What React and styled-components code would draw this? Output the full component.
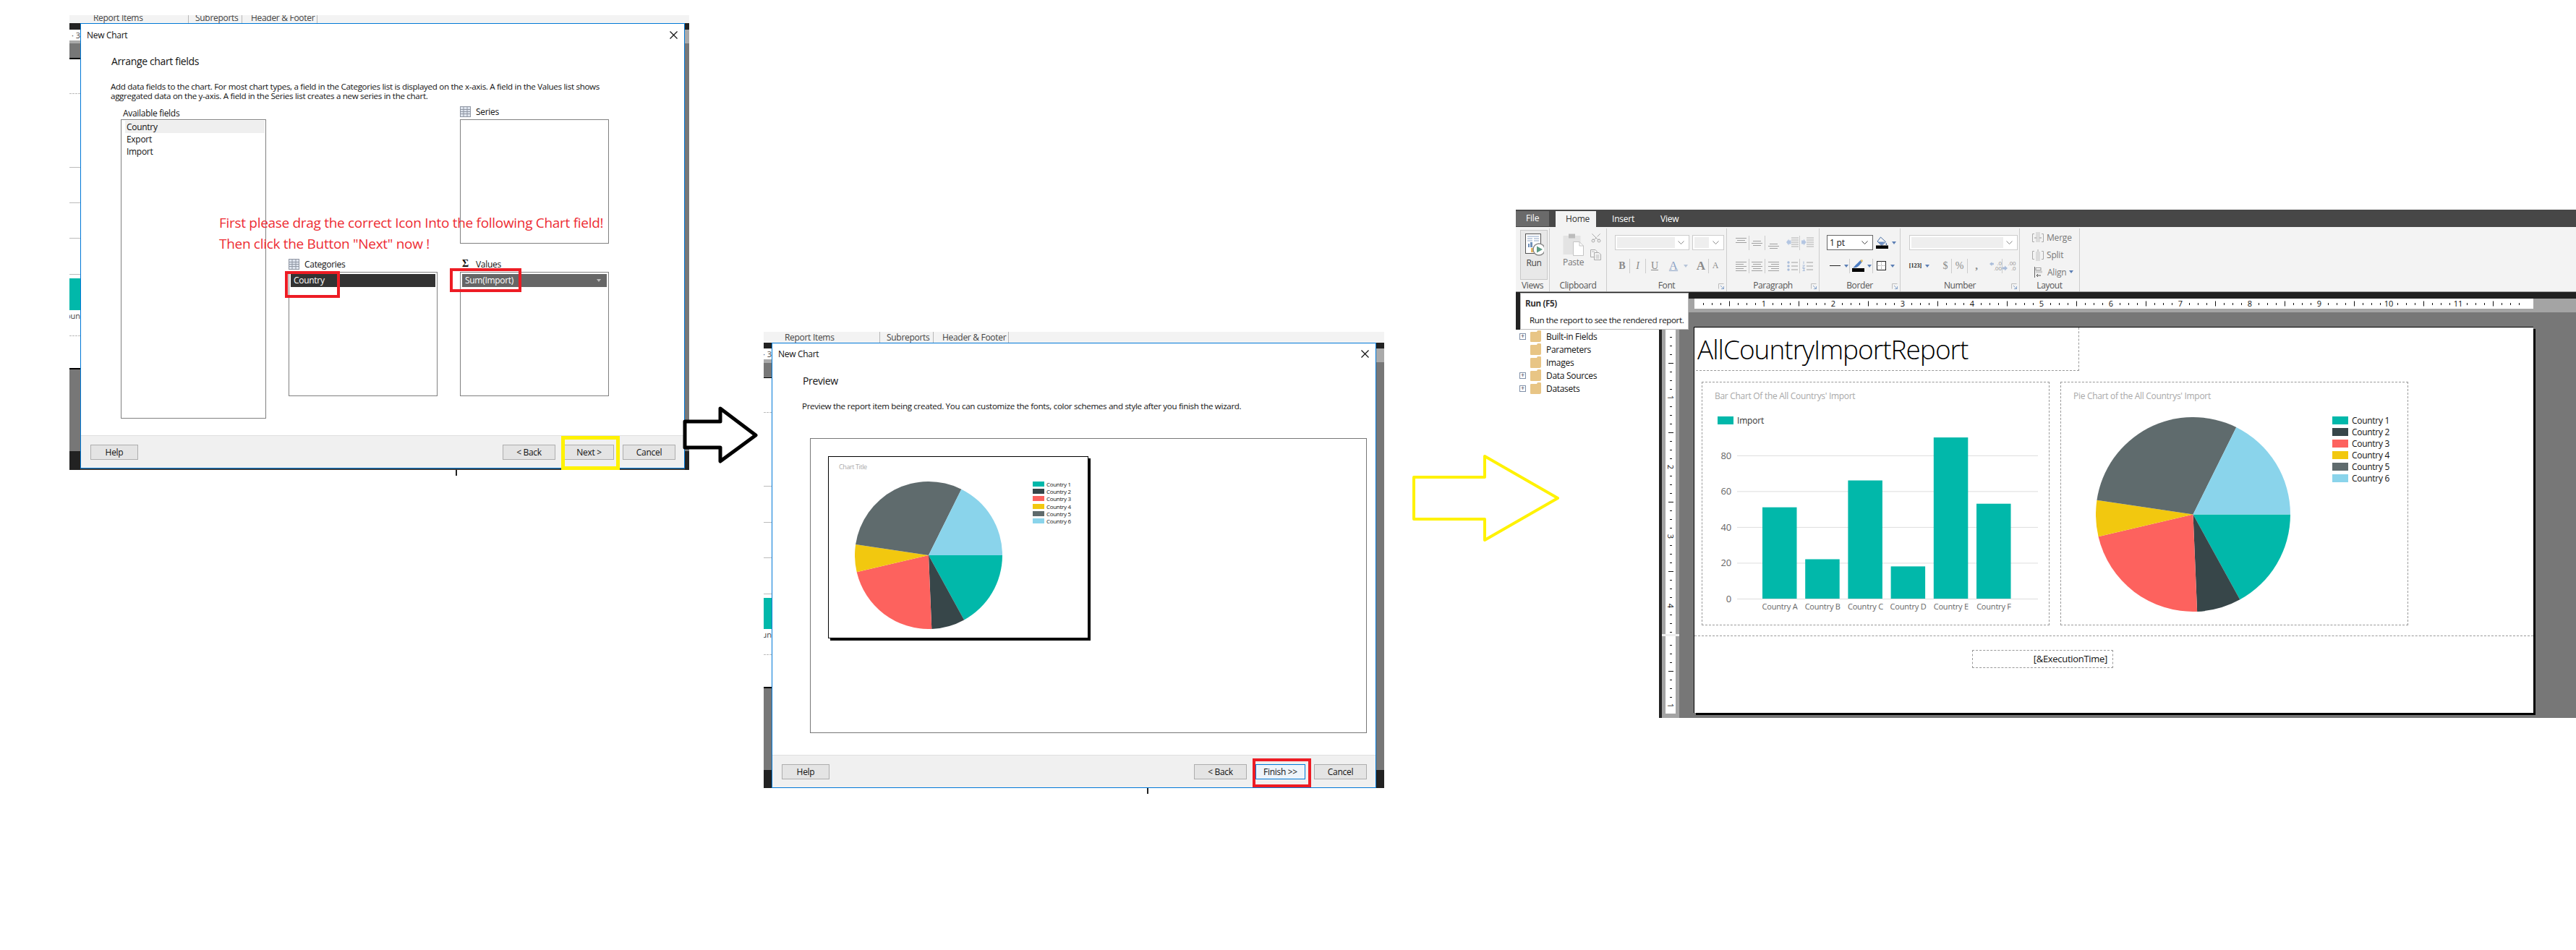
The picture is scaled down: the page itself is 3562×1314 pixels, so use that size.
import React from "react";
import styled, { createGlobalStyle } from "styled-components";
import { Scissors } from "lucide-react";

const FONT = `"Open Sans", "Liberation Sans", sans-serif`;

const GlobalStyle = createGlobalStyle`
	html, body {
		margin: 0;
		padding: 0;
		background: #fff;
	}
	body {
		font-family: ${FONT};
		color: #111;
	}
	* {
		box-sizing: border-box;
	}
`;

const COUNTRY_COLORS = ["#01B8AA", "#374649", "#FD625E", "#F2C80F", "#5F6B6D", "#8AD4EB"];
const COUNTRY_VALUES = [51, 22, 66, 18, 90, 53];
const COUNTRY_NAMES = ["Country 1", "Country 2", "Country 3", "Country 4", "Country 5", "Country 6"];

// the canvas holds three pasted screenshots and two arrows, placed freely
const Canvas = styled.div`
	position: relative;
	width: 3562px;
	height: 1314px;
	overflow: hidden;
	background: #fff;
`;

const Shot = styled.div`
	position: absolute;
	left: ${(p) => p.$left}px;
	top: ${(p) => p.$top}px;
	width: ${(p) => p.$w}px;
	height: ${(p) => p.$h}px;
	display: flex;
	flex-direction: column;
`;

const ArrowSvg = styled.svg`
	position: absolute;
	left: ${(p) => p.$left}px;
	top: ${(p) => p.$top}px;
`;

/* ---------- wizard screenshots ---------- */

const TabStrip = styled.div`
	flex: none;
	height: ${(p) => p.$h}px;
	background: #f3f3f3;
	overflow: hidden;
	display: flex;
	align-items: flex-end;
	padding-left: ${(p) => p.$inset}px;
	font-size: 12px;
	color: #444;
`;

const TabItem = styled.div`
	flex: none;
	width: ${(p) => p.$w}px;
	height: 15px;
	line-height: 15px;
	padding-left: ${(p) => p.$pad}px;
	border-right: 1px solid #b8b8b8;
	white-space: nowrap;
	letter-spacing: -0.3px;
`;

const WizardWindow = styled.div`
	flex: 1;
	display: flex;
	background: #3a3a3a;
	min-height: 0;
`;

const Edge = styled.div`
	flex: none;
	width: ${(p) => p.$w}px;
	display: flex;
	flex-direction: column;
	overflow: hidden;
`;

const EdgeSlice = styled.div`
	flex: ${(p) => (p.$grow ? "1" : "none")};
	height: ${(p) => p.$h}px;
	background: ${(p) => p.$bg};
	font-size: 11px;
	line-height: 15px;
	color: #444;
	white-space: nowrap;
	display: flex;
	justify-content: flex-end;
	border-bottom: ${(p) => (p.$line ? `1px ${p.$line} #bbb` : "none")};
`;

const Dialog = styled.div`
	flex: none;
	width: 836px;
	height: 616px;
	background: #fff;
	border: 1px solid #0078d7;
	display: flex;
	flex-direction: column;
`;

const TitleBar = styled.div`
	flex: none;
	height: 30px;
	display: flex;
	align-items: center;
	justify-content: space-between;
	padding: 0 9px 0 8px;
	font-size: 12px;
	letter-spacing: -0.3px;
`;

const WizardBody = styled.div`
	flex: 1;
	padding-left: 41px;
	min-height: 0;
`;

const WizardHeading = styled.div`
	margin: 12px 0 0 1px;
	height: 20px;
	line-height: 20px;
	font-size: 14px;
	letter-spacing: -0.35px;
`;

const WizardText = styled.p`
	margin: 18px 0 0;
	font-size: 11.6px;
	line-height: 13px;
	letter-spacing: -0.31px;
	white-space: nowrap;
`;

const FieldArea = styled.div`
	margin: 8px 0 0 14px;
	display: grid;
	grid-template-columns: 201px 206px 206px;
	column-gap: 31px;
`;

const FieldColumn = styled.div`
	display: flex;
	flex-direction: column;
	padding-top: ${(p) => p.$top || 0}px;
`;

const FieldLabel = styled.div`
	display: flex;
	align-items: center;
	gap: 7px;
	height: 18px;
	padding: ${(p) => (p.$plain ? "0 0 0 3px" : "0 0 4px 0")};
	margin-top: ${(p) => p.$gap || 0}px;
	font-size: 12px;
	letter-spacing: -0.3px;
`;

const FieldBox = styled.div`
	height: ${(p) => p.$h}px;
	border: 1px solid #808080;
	padding: ${(p) => p.$pad};
	font-size: 12px;
	letter-spacing: -0.3px;
`;

const ListRow = styled.div`
	height: 17px;
	line-height: 17px;
	padding-left: 2px;
	background: ${(p) => (p.$active ? "#efefef" : "transparent")};
`;

const FieldChip = styled.div`
	height: 18px;
	line-height: 18px;
	padding: 0 8px 0 4px;
	background: ${(p) => p.$bg};
	color: #fff;
	display: flex;
	align-items: center;
	justify-content: space-between;
`;

const Sigma = styled.span`
	width: 15px;
	text-align: center;
	font: bold 14px "Liberation Serif", serif;
`;

const ChipCaret = styled.span`
	width: 0;
	height: 0;
	border-left: 3.5px solid transparent;
	border-right: 3.5px solid transparent;
	border-top: 4px solid #bbb;
`;

const WizardFooter = styled.div`
	flex: none;
	height: 45px;
	background: #f0f0f0;
	border-top: 1px solid #dfdfdf;
	display: flex;
	gap: 12px;
	padding: 12px 14px 0 13px;
`;

const WizardButton = styled.div`
	flex: none;
	width: ${(p) => p.$w}px;
	height: 21px;
	line-height: 19px;
	margin-left: ${(p) => p.$left || 0}px;
	text-align: center;
	font-size: 12px;
	letter-spacing: -0.3px;
	background: ${(p) => (p.$primary ? "#eef4fa" : "#e4e4e4")};
	border: 1px solid ${(p) => (p.$primary ? "#0078d7" : "#adadad")};
`;

const Callout = styled.div`
	position: absolute;
	left: ${(p) => p.$left}px;
	top: ${(p) => p.$top}px;
	width: ${(p) => p.$w}px;
	height: ${(p) => p.$h}px;
	border: ${(p) => p.$b || 4}px solid ${(p) => p.$color};
`;

const Instruction = styled.div`
	position: absolute;
	left: 207px;
	top: 273px;
	font-size: 19px;
	line-height: 29px;
	letter-spacing: -0.3px;
	color: #ed2c33;
	white-space: nowrap;
`;

const CursorTick = styled.div`
	position: absolute;
	left: ${(p) => p.$left}px;
	top: ${(p) => p.$top}px;
	width: 2px;
	height: 8px;
	background: #222;
`;

const PreviewBox = styled.div`
	margin: 38px 0 0 11px;
	width: 770px;
	height: 408px;
	border: 1px solid #777;
	padding: 24px 0 0 24px;
`;

const PreviewFrame = styled.div`
	width: 360px;
	height: 252px;
	border: 1px solid #000;
	box-shadow: 3px 3px 0 #000;
	padding: 9px 0 0 14px;
	background: #fff;
`;

const PreviewTitle = styled.div`
	height: 10px;
	line-height: 10px;
	font-size: 9px;
	letter-spacing: -0.4px;
	color: #aaa;
`;

const PreviewRow = styled.div`
	display: flex;
	align-items: flex-start;
	margin: 15px 0 0 22px;
	gap: 42px;
`;

const Legend = styled.div`
	display: flex;
	flex-direction: column;
	gap: ${(p) => p.$gap}px;
	margin-top: ${(p) => p.$top || 0}px;
`;

const LegendRow = styled.div`
	display: flex;
	align-items: center;
	gap: ${(p) => p.$gap}px;
	height: ${(p) => p.$h}px;
	font-size: ${(p) => p.$size}px;
	letter-spacing: -0.3px;
	white-space: nowrap;
`;

const LegendSwatch = styled.span`
	flex: none;
	width: ${(p) => p.$w}px;
	height: ${(p) => p.$h}px;
	background: ${(p) => p.$color};
`;

/* ---------- report designer screenshot ---------- */

const MenuBar = styled.div`
	flex: none;
	height: 24px;
	background: #474747;
	display: flex;
	align-items: flex-end;
	font-size: 12px;
	letter-spacing: -0.2px;
	color: #fff;
`;

const MenuFile = styled.div`
	width: 46px;
	height: 21px;
	margin-bottom: 1px;
	line-height: 19px;
	padding-left: 14px;
	background: #6a6a6a;
	margin-right: 9px;
`;

const MenuTab = styled.div`
	width: ${(p) => p.$w}px;
	height: 22px;
	line-height: 22px;
	padding-left: ${(p) => p.$pad}px;
	background: ${(p) => (p.$active ? "#f3f3f3" : "transparent")};
	color: ${(p) => (p.$active ? "#333" : "#fff")};
`;

const Ribbon = styled.div`
	flex: none;
	height: 90px;
	background: #f3f3f3;
	border-bottom: 1px solid #999;
	display: flex;
	padding-top: 2px;
`;

const RibbonGroup = styled.div`
	position: relative;
	flex: none;
	width: ${(p) => p.$w}px;
	height: 87px;
	border-right: 1px solid #ccc;
	display: flex;
	flex-direction: column;
	padding-left: ${(p) => p.$pad || 0}px;
`;

const GroupContent = styled.div`
	flex: 1;
	min-height: 0;
	display: flex;
	flex-direction: column;
	gap: ${(p) => p.$gap ?? 11}px;
	padding-top: ${(p) => p.$top ?? 9}px;
`;

const GroupLabel = styled.div`
	flex: none;
	height: 15px;
	line-height: 14px;
	margin-left: ${(p) => -(p.$pad || 0)}px;
	text-align: center;
	font-size: 12px;
	letter-spacing: -0.4px;
	color: #555;
`;

const Launcher = styled.svg`
	position: absolute;
	right: 3px;
	bottom: 3px;
`;

const RunButton = styled.div`
	width: 38px;
	height: 69px;
	margin: 2px 0 0 6px;
	background: #e8e8e8;
	border: 1px solid #c8c8c8;
	display: flex;
	flex-direction: column;
	align-items: center;
	padding-top: 4px;
	font-size: 12px;
	letter-spacing: -0.3px;
	color: #444;
`;

const BigLabel = styled.div`
	margin-top: ${(p) => p.$top}px;
	font-size: 12px;
	line-height: 16px;
	letter-spacing: -0.3px;
	color: ${(p) => p.$color || "#777"};
`;

const ClipboardBody = styled.div`
	display: flex;
	gap: 9px;
	padding: 7px 0 0 18px;
`;

const PasteColumn = styled.div`
	display: flex;
	flex-direction: column;
	align-items: center;
`;

const SmallColumn = styled.div`
	display: flex;
	flex-direction: column;
	gap: 8px;
	margin-top: -2px;
`;

const ScissorsIcon = styled(Scissors)`
	transform: rotate(-90deg);
`;

const RibbonRow = styled.div`
	display: flex;
	align-items: center;
	height: ${(p) => p.$h || 21}px;
`;

const Cell = styled.div`
	flex: none;
	width: ${(p) => p.$w}px;
	height: 20px;
	display: flex;
	align-items: center;
	justify-content: center;
	margin-right: ${(p) => p.$gap || 0}px;
	border-right: ${(p) => (p.$sep ? "1px solid #ccc" : "none")};
	color: ${(p) => p.$color || "#8a8a8a"};
	font: ${(p) => (p.$bold ? "bold " : "")}${(p) => (p.$italic ? "italic " : "")}${(p) => p.$size || 14}px "Liberation Serif", serif;
	text-decoration: ${(p) => (p.$under ? "underline" : "none")};
	white-space: nowrap;
`;

const DecimalStack = styled.span`
	display: flex;
	flex-direction: column;
	font: 8px/7px "Liberation Sans", sans-serif;
	color: #999;
	text-align: right;
`;

const ComboBox = styled.div`
	flex: none;
	width: ${(p) => p.$w}px;
	height: 21px;
	margin-right: ${(p) => p.$gap || 0}px;
	background: #fff;
	border: 1px solid ${(p) => (p.$dark ? "#666" : "#ccc")};
	display: flex;
	align-items: center;
	justify-content: space-between;
	padding: 2px 6px 2px 2px;
	font-size: 12px;
	letter-spacing: -0.2px;
`;

const ComboFill = styled.div`
	width: ${(p) => p.$w}px;
	height: 100%;
	background: #eeeeee;
`;

const ComboText = styled.span`
	padding-left: 1px;
`;

const LayoutRow = styled.div`
	display: flex;
	align-items: center;
	height: 24px;
	gap: 4px;
	padding-left: ${(p) => p.$pad}px;
	font-size: 12px;
	letter-spacing: -0.2px;
	color: #777;
`;

const DarkBar = styled.div`
	flex: none;
	height: 9px;
	background: #222;
`;

const Designer = styled.div`
	flex: 1;
	min-height: 0;
	display: flex;
`;

const TreeColumn = styled.div`
	flex: none;
	width: 202px;
	background: #fff;
	border-right: 4px solid #222;
	display: flex;
	flex-direction: column;
`;

const TreeHead = styled.div`
	flex: none;
	height: 43px;
	background: #222;
`;

const TreeRow = styled.div`
	display: flex;
	align-items: center;
	height: 18px;
	padding-left: 5px;
	font-size: 12px;
	letter-spacing: -0.3px;
`;

const Expander = styled.span`
	flex: none;
	width: 9px;
	height: 9px;
	margin-right: 6px;
	border: 1px solid ${(p) => (p.$empty ? "transparent" : "#7f8fa8")};
	color: #445;
	font: 9px/7px "Liberation Sans", sans-serif;
	text-align: center;
`;

const TreeLabel = styled.span`
	margin-left: 7px;
`;

const DesignArea = styled.div`
	flex: 1;
	min-width: 0;
	display: flex;
	flex-direction: column;
`;

const RulerBand = styled.div`
	flex: none;
	height: 19px;
	background: #a4a4a4;
	padding-left: 45px;
`;

const WorkRow = styled.div`
	flex: 1;
	min-height: 0;
	display: flex;
`;

const RulerTrack = styled.div`
	flex: none;
	width: 24px;
	background: #a4a4a4;
	padding-top: 22px;
	display: flex;
	flex-direction: column;
`;

const RulerGap = styled.div`
	flex: none;
	height: 3px;
	background: #eee;
`;

const RulerSvg = styled.svg`
	display: block;
	flex: none;
	background: #fff;
	margin-left: ${(p) => p.$left || 0}px;
`;

const RulerDigit = styled.text`
	font-family: ${FONT};
	font-size: 11px;
	fill: #111;
`;

const Workspace = styled.div`
	flex: 1;
	background: #777;
	padding: 20px 0 0 20px;
`;

const ReportPage = styled.div`
	width: 1161px;
	height: 534px;
	background: #fff;
	border-top: 1px solid #000;
	border-left: 1px solid #000;
	box-shadow: 3px 3px 0 #000;
`;

const dash = "1px dashed #999";

const ReportHeader = styled.div`
	width: 530px;
	height: 60px;
	margin-left: 2px;
	border-right: ${dash};
	border-bottom: ${dash};
	padding-left: 2px;
	font-size: 37px;
	font-weight: 300;
	line-height: 60px;
	letter-spacing: -1px;
	white-space: nowrap;
	color: #000;
`;

const ChartRow = styled.div`
	display: flex;
	gap: 15px;
	margin: 15px 0 0 10px;
`;

const ChartCard = styled.div`
	flex: none;
	width: 481px;
	height: 337px;
	border: ${dash};
	padding: 11px 0 0 17px;
`;

const ChartCaption = styled.div`
	height: 16px;
	line-height: 16px;
	font-size: 12px;
	letter-spacing: -0.3px;
	color: #a8a8a8;
	white-space: nowrap;
`;

const BarSvg = styled.svg`
	display: block;
	margin: 8px 0 0 -17px;
`;

const AxisText = styled.text`
	font-family: ${FONT};
	font-size: ${(p) => p.$size}px;
	fill: ${(p) => p.$color || "#666"};
	letter-spacing: -0.2px;
`;

const PieRow = styled.div`
	display: flex;
	align-items: flex-start;
	gap: 58px;
	margin: 21px 0 0 31px;
`;

const ReportFooter = styled.div`
	margin-top: 14px;
	border-top: ${dash};
	padding: 19px 0 0 384px;
`;

const TimeBox = styled.div`
	width: 195px;
	height: 25px;
	line-height: 23px;
	border: ${dash};
	padding-right: 7px;
	text-align: right;
	font-size: 13px;
	letter-spacing: -0.3px;
`;

const Tooltip = styled.div`
	position: absolute;
	left: 6px;
	top: 115px;
	width: 233px;
	height: 51px;
	background: #fff;
	border: 1px solid #bbb;
	padding: 6px 0 0 6px;
	font-size: 11.6px;
	letter-spacing: -0.38px;
`;

const TooltipTitle = styled.div`
	height: 15px;
	line-height: 15px;
	font-weight: 700;
	color: #333;
`;

const TooltipText = styled.div`
	margin: 8px 0 0 6px;
	height: 15px;
	line-height: 15px;
	white-space: nowrap;
`;

/* ---------- drawings ---------- */

const Close = () => (
	<svg width="11" height="11" viewBox="0 0 11 11">
		<path d="M0.5 0.5 L10.5 10.5 M10.5 0.5 L0.5 10.5" stroke="#111" strokeWidth="1.2" />
	</svg>
);

const TableIcon = () => (
	<svg width="15" height="15" viewBox="0 0 15 15">
		<rect x="0.5" y="0.5" width="14" height="14" fill="#dfe5ee" stroke="#8f96a3" />
		<path d="M0 4.5H15M0 7.5H15M0 10.5H15M5 0V15M10 0V15" stroke="#8f96a3" strokeWidth="1" />
	</svg>
);

const Chevron = ({ color = "#888" }) => (
	<svg width="9" height="6" viewBox="0 0 9 6">
		<path d="M0.5 0.5 L4.5 4.5 L8.5 0.5" fill="none" stroke={color} strokeWidth="1" />
	</svg>
);

const Caret = ({ color = "#5c7fb5" }) => (
	<svg width="6" height="4" viewBox="0 0 6 4">
		<path d="M0 0H6L3 4Z" fill={color} />
	</svg>
);

const CornerMark = () => (
	<Launcher width="8" height="8" viewBox="0 0 8 8">
		<path d="M0.5 7.5V0.5H7.5" fill="none" stroke="#bbb" />
		<path d="M3 3L7.5 7.5M7.5 4V7.5H4" fill="none" stroke="#8aa6cc" />
	</Launcher>
);

const RunIcon = () => (
	<svg width="27" height="31" viewBox="0 0 27 31">
		<rect x="1.5" y="0.5" width="21" height="27" fill="#fff" stroke="#555" />
		<path d="M4 4H20M4 7H11M13 7H20M4 10H11M13 10H20" stroke="#8ba3c4" />
		<rect x="5" y="14" width="2" height="5" fill="#6f8fb8" />
		<rect x="8" y="12" width="3" height="7" fill="#6f8fb8" />
		<rect x="9" y="20" width="3" height="6" fill="#e8b860" />
		<circle cx="20" cy="22" r="8" fill="#fff" stroke="#888" strokeWidth="1.5" />
		<path d="M17 17.5L25 22L17 26.5Z" fill="#5e9c84" />
	</svg>
);

const PasteIcon = () => (
	<svg width="29" height="31" viewBox="0 0 29 31">
		<rect x="0.5" y="3" width="24" height="26" fill="#e3e3e3" />
		<rect x="8" y="0.5" width="9" height="6" fill="#bcbcbc" />
		<path d="M14.5 11.5H23L28.5 17V30.5H14.5Z" fill="#fff" stroke="#c4c4c4" />
		<path d="M23 11.5V17H28.5" fill="none" stroke="#c4c4c4" />
	</svg>
);

const CopyIcon = () => (
	<svg width="15" height="15" viewBox="0 0 15 15">
		<path d="M0.5 0.5H7L9 2.5V10.5H0.5Z" fill="#f6f6f6" stroke="#aaa" />
		<path d="M5.5 4.5H12L14.5 7V14.5H5.5Z" fill="#f6f6f6" stroke="#aaa" />
		<path d="M2 3H6M7.5 8H12.5M7.5 10H12.5M7.5 12H12.5" stroke="#bbb" />
	</svg>
);

const AlignLines = ({ align, widths, offset = 0 }) => {
	const span = 15;
	return (
		<svg width="15" height="20" viewBox="0 0 15 20">
			{widths.map((w, i) => {
				const x = align === "left" ? 0 : align === "right" ? span - w : (span - w) / 2;
				return <rect key={i} x={x} y={offset + i * 3} width={w} height="1" fill="#a0a0a0" />;
			})}
		</svg>
	);
};

const IndentIcon = ({ flip }) => (
	<svg width="17" height="15" viewBox="0 0 17 15">
		<path d="M7 1H17M7 4H17M7 7H17M7 10H17M7 13H17" stroke="#b0b0b0" />
		<path d={flip ? "M0 4.5H3V2.5L6.5 7L3 11.5V9.5H0Z" : "M6.5 4.5H3.5V2.5L0 7L3.5 11.5V9.5H6.5Z"} fill="#b4c6e2" />
	</svg>
);

const ListIcon = ({ numbered }) => (
	<svg width="15" height="14" viewBox="0 0 15 14">
		<path d="M6 2H15M6 7H15M6 12H15" stroke="#a0a0a0" />
		{numbered ? (
			<path d="M2 0.5V4M0.5 6H3.5L0.5 9H3.5M0.5 10.5H3.5L2 12L3.5 13.5H0.5" fill="none" stroke="#a9bcd9" strokeWidth="1" />
		) : (
			<g fill="#a9bcd9">
				<circle cx="2" cy="2" r="1.7" />
				<circle cx="2" cy="7" r="1.7" />
				<circle cx="2" cy="12" r="1.7" />
			</g>
		)}
	</svg>
);

const BucketIcon = () => (
	<svg width="17" height="17" viewBox="0 0 17 17">
		<path d="M6.5 1L13.5 7.5L8 12.5L2 7Z" fill="#f4f4f4" stroke="#4a6fa5" />
		<path d="M2.5 7.5H12.5L8 12Z" fill="#6d8fc4" />
		<path d="M14 8.5C15.5 10.5 15.5 12 14.5 12C13.5 12 13.3 10.5 14 8.5Z" fill="#4a6fa5" />
		<rect x="0" y="12.5" width="17" height="4.5" fill="#000" />
	</svg>
);

const PenIcon = () => (
	<svg width="17" height="17" viewBox="0 0 17 17">
		<path d="M1 11.5C3 10 4 8 7 5.5L12 0.5L14.5 2.5L10 8C8 10.5 5 11.5 1 11.5Z" fill="#4f7fc4" />
		<path d="M11.5 1L14 0L15 2L13 4Z" fill="#e8c060" />
		<rect x="0" y="12" width="17" height="5" fill="#000" />
	</svg>
);

const BorderBoxIcon = () => (
	<svg width="13" height="13" viewBox="0 0 13 13">
		<rect x="0.5" y="0.5" width="12" height="12" fill="#fff" stroke="#222" />
		<path d="M6.5 2V11M2 6.5H11" stroke="#888" strokeDasharray="1 1" />
	</svg>
);

const DecimalArrow = ({ flip }) => (
	<svg width="7" height="14" viewBox="0 0 7 14">
		<path d={flip ? "M0 8.5H3V6.5L7 10L3 13.5V11.5H0Z" : "M7 2H4V0L0 3.5L4 7V5H7Z"} fill="#a9bcd9" />
	</svg>
);

const MergeIcon = ({ split }) => (
	<svg width="16" height="16" viewBox="0 0 16 16">
		<path d="M3 2.5H0.5V13.5H3M13 2.5H15.5V13.5H13" fill="none" stroke="#aaa" />
		<rect x="5" y={split ? 3 : 0} width="6" height={split ? 13 : 14} fill="#dcdcdc" />
		{split ? <path d="M8 0V3" stroke="#aaa" /> : <path d="M3 8H6M13 8H10" stroke="#999" />}
	</svg>
);

const AlignIcon = () => (
	<svg width="11" height="15" viewBox="0 0 11 15">
		<path d="M0.5 0V15" stroke="#666" />
		<rect x="2" y="1.5" width="7" height="3" fill="#fff" stroke="#999" />
		<rect x="2" y="5.5" width="9" height="3" fill="#ccc" />
		<path d="M9 12H3M5 10L3 12L5 14" fill="none" stroke="#555" />
	</svg>
);

const FolderIcon = () => (
	<svg width="15" height="16" viewBox="0 0 15 16">
		<path d="M0 3C0 2 1 2 2 2H9L10 0H13C14 0 15 0 15 1V14C15 15 14 16 13 16H1C0 16 0 15 0 14Z" fill="#e8c585" />
	</svg>
);

const PieChart = ({ size, values, colors }) => {
	const r = size / 2;
	const total = values.reduce((a, b) => a + b, 0);
	let angle = 0;
	const slices = values.map((v, i) => {
		const start = angle;
		angle += (v / total) * Math.PI * 2;
		const large = angle - start > Math.PI ? 1 : 0;
		const x1 = r + r * Math.cos(start);
		const y1 = r + r * Math.sin(start);
		const x2 = r + r * Math.cos(angle);
		const y2 = r + r * Math.sin(angle);
		return <path key={i} d={`M${r} ${r}L${x1} ${y1}A${r} ${r} 0 ${large} 1 ${x2} ${y2}Z`} fill={colors[i]} />;
	});
	return (
		<svg width={size} height={size} viewBox={`0 0 ${size} ${size}`}>
			{slices}
		</svg>
	);
};

const CountryLegend = ({ gap, rowH, size, swatchW, swatchH, textGap, top }) => (
	<Legend $gap={gap} $top={top}>
		{COUNTRY_NAMES.map((name, i) => (
			<LegendRow key={name} $gap={textGap} $h={rowH} $size={size}>
				<LegendSwatch $w={swatchW} $h={swatchH} $color={COUNTRY_COLORS[i]} />
				{name}
			</LegendRow>
		))}
	</Legend>
);

const BarChart = () => {
	// y of value v in svg coordinates
	const y = (v) => 264 - v * 2.477;
	const names = ["Country A", "Country B", "Country C", "Country D", "Country E", "Country F"];
	return (
		<BarSvg width="479" height="295" viewBox="0 0 479 295">
			<rect x="21" y="12" width="22" height="11" fill="#01B8AA" />
			<AxisText x="48" y="22" $size={12} $color="#333">Import</AxisText>
			{[0, 20, 40, 60, 80].map((v) => (
				<g key={v}>
					<line x1="48" x2="464" y1={y(v) + 0.5} y2={y(v) + 0.5} stroke="#ddd" />
					<AxisText x="40" y={y(v) + 5} textAnchor="end" $size={13}>{v}</AxisText>
				</g>
			))}
			{COUNTRY_VALUES.map((v, i) => (
				<g key={names[i]}>
					<rect x={83 + i * 59.2} y={y(v)} width="47.5" height={v * 2.477} fill="#01B8AA" />
					<AxisText x={107 + i * 59.2} y="279" textAnchor="middle" $size={11}>{names[i]}</AxisText>
				</g>
			))}
		</BarSvg>
	);
};

// 96 pixels to the inch, a tick every eighth
const RULER_STEP = 12;

const HorizontalRuler = () => {
	const marks = [];
	for (let i = 1; i < 96; i++) {
		const x = i * RULER_STEP;
		if (i % 8 === 0) {
			marks.push(<RulerDigit key={i} x={x} y="11" textAnchor="middle">{i / 8}</RulerDigit>);
		} else if (i % 4 === 0) {
			marks.push(<rect key={i} x={x} y="3.5" width="1" height="7" fill="#111" />);
		} else {
			marks.push(<rect key={i} x={x} y="6" width="1" height="3" fill="#111" />);
		}
	}
	return (
		<RulerSvg width="1160" height="14" viewBox="0 0 1160 14">
			{marks}
		</RulerSvg>
	);
};

const VerticalRuler = ({ height }) => {
	const marks = [];
	for (let i = 1; i * RULER_STEP < height; i++) {
		const y = i * RULER_STEP;
		if (i % 8 === 0) {
			marks.push(
				<RulerDigit key={i} x="7" y={y} textAnchor="middle" dominantBaseline="central" transform={`rotate(90 7 ${y})`}>
					{i / 8}
				</RulerDigit>
			);
		} else if (i % 4 === 0) {
			marks.push(<rect key={i} x="4" y={y} width="7" height="1" fill="#111" />);
		} else {
			marks.push(<rect key={i} x="6" y={y} width="3" height="1" fill="#111" />);
		}
	}
	return (
		<RulerSvg $left={5} width="14" height={height} viewBox={`0 0 14 ${height}`}>
			{marks}
		</RulerSvg>
	);
};

/* ---------- pieces of the wizard ---------- */

const LEFT_EDGE = [
	{ h: 8.6, bg: "#222" },
	{ h: 15, bg: "#fff", text: "· 3" },
	{ h: 4.5, bg: "#aaa" },
	{ h: 20, bg: "#777" },
	{ h: 1.5, bg: "#000" },
	{ h: 48, bg: "#fff", line: "dashed" },
	{ h: 102, bg: "#fff", line: "solid" },
	{ h: 49.5, bg: "#fff", line: "solid" },
	{ h: 49, bg: "#fff", line: "solid" },
	{ h: 50, bg: "#fff", line: "solid" },
	{ h: 5, bg: "#fff" },
	{ h: 43.6, bg: "#01B8AA" },
	{ h: 36, bg: "#fff", line: "dashed", text: "oun" },
	{ h: 44, bg: "#fff" },
	{ h: 2, bg: "#000" },
	{ h: 113, bg: "#777" },
	{ grow: true, bg: "#222" },
];

const RIGHT_EDGE = [
	{ h: 8.6, bg: "#222" },
	{ h: 19.4, bg: "#aaa" },
	{ h: 564, bg: "#777" },
	{ grow: true, bg: "#222" },
];

const EdgeColumn = ({ width, slices }) => (
	<Edge $w={width}>
		{slices.map((s, i) => (
			<EdgeSlice key={i} $h={s.h} $bg={s.bg} $grow={s.grow} $line={s.line}>
				{s.text}
			</EdgeSlice>
		))}
	</Edge>
);

const WizardTabs = ({ height, inset }) => (
	<TabStrip $h={height} $inset={inset}>
		<TabItem $w={132} $pad={0}>Report Items</TabItem>
		<TabItem $w={74} $pad={9}>Subreports</TabItem>
		<TabItem $w={104} $pad={12}>Header &amp; Footer</TabItem>
	</TabStrip>
);

const WizardButtons = ({ nextLabel, primary }) => (
	<WizardFooter>
		<WizardButton $w={66}>Help</WizardButton>
		<WizardButton $w={73} $left={492}>&lt; Back</WizardButton>
		<WizardButton $w={69} $primary={primary}>{nextLabel}</WizardButton>
		<WizardButton $w={73}>Cancel</WizardButton>
	</WizardFooter>
);

const ArrangeDialog = () => (
	<Dialog>
		<TitleBar>
			New Chart
			<Close />
		</TitleBar>
		<WizardBody>
			<WizardHeading>Arrange chart fields</WizardHeading>
			<WizardText>
				Add data fields to the chart. For most chart types, a field in the Categories list is displayed on the x-axis. A field in the Values list shows
				<br />
				aggregated data on the y-axis. A field in the Series list creates a new series in the chart.
			</WizardText>
			<FieldArea>
				<FieldColumn>
					<FieldLabel $plain>Available fields</FieldLabel>
					<FieldBox $h={414} $pad="1px 1px 0 5px">
						<ListRow $active>Country</ListRow>
						<ListRow>Export</ListRow>
						<ListRow>Import</ListRow>
					</FieldBox>
				</FieldColumn>
				<FieldColumn $top={211}>
					<FieldLabel>
						<TableIcon />
						Categories
					</FieldLabel>
					<FieldBox $h={172} $pad="2px 2px 0">
						<FieldChip $bg="#333">Country</FieldChip>
					</FieldBox>
				</FieldColumn>
				<FieldColumn>
					<FieldLabel>
						<TableIcon />
						Series
					</FieldLabel>
					<FieldBox $h={172} />
					<FieldLabel $gap={21}>
						<Sigma>Σ</Sigma>
						Values
					</FieldLabel>
					<FieldBox $h={172} $pad="2px 2px 0">
						<FieldChip $bg="#666">
							Sum(Import)
							<ChipCaret />
						</FieldChip>
					</FieldBox>
				</FieldColumn>
			</FieldArea>
		</WizardBody>
		<WizardButtons nextLabel="Next >" />
	</Dialog>
);

const PreviewDialog = () => (
	<Dialog>
		<TitleBar>
			New Chart
			<Close />
		</TitleBar>
		<WizardBody>
			<WizardHeading>Preview</WizardHeading>
			<WizardText>Preview the report item being created. You can customize the fonts, color schemes and style after you finish the wizard.</WizardText>
			<PreviewBox>
				<PreviewFrame>
					<PreviewTitle>Chart Title</PreviewTitle>
					<PreviewRow>
						<PieChart size={204} values={COUNTRY_VALUES} colors={COUNTRY_COLORS} />
						<CountryLegend gap={3.4} rowH={7} size={8} swatchW={16} swatchH={7} textGap={3} />
					</PreviewRow>
				</PreviewFrame>
			</PreviewBox>
		</WizardBody>
		<WizardButtons nextLabel="Finish >>" primary />
	</Dialog>
);

/* ---------- pieces of the designer ---------- */

const FontGroup = () => (
	<RibbonGroup $w={166} $pad={11}>
		<GroupContent>
			<RibbonRow>
				<ComboBox $w={103} $gap={4}>
					<ComboFill $w={80} />
					<Chevron />
				</ComboBox>
				<ComboBox $w={44}>
					<ComboFill $w={20} />
					<Chevron />
				</ComboBox>
			</RibbonRow>
			<RibbonRow>
				<Cell $w={21} $sep $bold>B</Cell>
				<Cell $w={22} $sep $italic>I</Cell>
				<Cell $w={24} $under>U</Cell>
				<Cell $w={28} $size={17} $under $color="#8fa5c7">A</Cell>
				<Cell $w={6} $gap={8}><Caret color="#b5c3d8" /></Cell>
				<Cell $w={21} $sep $size={17} $bold>A</Cell>
				<Cell $w={18} $size={12}>A</Cell>
			</RibbonRow>
		</GroupContent>
		<GroupLabel $pad={11}>Font</GroupLabel>
		<CornerMark />
	</RibbonGroup>
);

const ParagraphGroup = () => (
	<RibbonGroup $w={128} $pad={9}>
		<GroupContent>
			<RibbonRow>
				<Cell $w={22} $sep><AlignLines align="center" widths={[15, 11, 15]} offset={3} /></Cell>
				<Cell $w={22} $sep><AlignLines align="center" widths={[11, 15, 11]} offset={7} /></Cell>
				<Cell $w={22} $gap={5}><AlignLines align="center" widths={[11, 15, 11]} offset={11} /></Cell>
				<Cell $w={21} $sep><IndentIcon /></Cell>
				<Cell $w={21}><IndentIcon flip /></Cell>
			</RibbonRow>
			<RibbonRow>
				<Cell $w={22} $sep><AlignLines align="left" widths={[15, 11, 15, 11, 15]} offset={4} /></Cell>
				<Cell $w={22} $sep><AlignLines align="center" widths={[15, 11, 15, 11, 15]} offset={4} /></Cell>
				<Cell $w={22} $gap={5}><AlignLines align="right" widths={[15, 11, 15, 11, 15]} offset={4} /></Cell>
				<Cell $w={21} $sep><ListIcon /></Cell>
				<Cell $w={21}><ListIcon numbered /></Cell>
			</RibbonRow>
		</GroupContent>
		<GroupLabel $pad={9}>Paragraph</GroupLabel>
		<CornerMark />
	</RibbonGroup>
);

const BorderGroup = () => (
	<RibbonGroup $w={112} $pad={10}>
		<GroupContent>
			<RibbonRow>
				<ComboBox $w={64} $gap={4} $dark>
					<ComboText>1 pt</ComboText>
					<Chevron color="#444" />
				</ComboBox>
				<Cell $w={17} $gap={5}><BucketIcon /></Cell>
				<Caret />
			</RibbonRow>
			<RibbonRow>
				<Cell $w={22}>
					<svg width="15" height="2" viewBox="0 0 15 2">
						<rect width="15" height="1" fill="#222" />
					</svg>
				</Cell>
				<Cell $w={10} $sep><Caret /></Cell>
				<Cell $w={22}><PenIcon /></Cell>
				<Cell $w={10} $sep $gap={4}><Caret /></Cell>
				<Cell $w={14} $gap={6}><BorderBoxIcon /></Cell>
				<Caret />
			</RibbonRow>
		</GroupContent>
		<GroupLabel $pad={10}>Border</GroupLabel>
		<CornerMark />
	</RibbonGroup>
);

const NumberGroup = () => (
	<RibbonGroup $w={165} $pad={12}>
		<GroupContent>
			<RibbonRow>
				<ComboBox $w={150}>
					<ComboFill $w={127} />
					<Chevron />
				</ComboBox>
			</RibbonRow>
			<RibbonRow>
				<Cell $w={17} $size={8} $bold $color="#222" $gap={4}>[123]</Cell>
				<Cell $w={7} $gap={14}><Caret /></Cell>
				<Cell $w={17} $sep $size={14}>$</Cell>
				<Cell $w={22} $sep $size={14}>%</Cell>
				<Cell $w={24} $bold $size={15} $gap={6}>,</Cell>
				<Cell $w={18} $sep>
					<DecimalArrow />
					<DecimalStack>
						<span>.0</span>
						<span>.00</span>
					</DecimalStack>
				</Cell>
				<Cell $w={19}>
					<DecimalArrow flip />
					<DecimalStack>
						<span>.00</span>
						<span>.0</span>
					</DecimalStack>
				</Cell>
			</RibbonRow>
		</GroupContent>
		<GroupLabel $pad={12}>Number</GroupLabel>
		<CornerMark />
	</RibbonGroup>
);

const LayoutGroup = () => (
	<RibbonGroup $w={83}>
		<GroupContent $top={1} $gap={0}>
			<LayoutRow $pad={17}>
				<MergeIcon />
				Merge
			</LayoutRow>
			<LayoutRow $pad={17}>
				<MergeIcon split />
				Split
			</LayoutRow>
			<LayoutRow $pad={20}>
				<AlignIcon />
				&nbsp;Align
				<Caret />
			</LayoutRow>
		</GroupContent>
		<GroupLabel>Layout</GroupLabel>
	</RibbonGroup>
);

const TREE_ITEMS = [
	{ name: "Built-in Fields", expand: true },
	{ name: "Parameters" },
	{ name: "Images" },
	{ name: "Data Sources", expand: true },
	{ name: "Datasets", expand: true },
];

const DesignerShot = () => (
	<Shot $left={2096} $top={290} $w={1466} $h={703}>
		<MenuBar>
			<MenuFile>File</MenuFile>
			<MenuTab $w={56} $pad={14} $active>Home</MenuTab>
			<MenuTab $w={67} $pad={22}>Insert</MenuTab>
			<MenuTab $w={50} $pad={22}>View</MenuTab>
		</MenuBar>
		<Ribbon>
			<RibbonGroup $w={47}>
				<RunButton>
					<RunIcon />
					<BigLabel $top={2} $color="#444">Run</BigLabel>
				</RunButton>
				<GroupContent $top={0} />
				<GroupLabel>Views</GroupLabel>
			</RibbonGroup>
			<RibbonGroup $w={79}>
				<ClipboardBody>
					<PasteColumn>
						<PasteIcon />
						<BigLabel $top={1}>Paste</BigLabel>
					</PasteColumn>
					<SmallColumn>
						<ScissorsIcon size={16} color="#aaa" strokeWidth={1.5} />
						<CopyIcon />
					</SmallColumn>
				</ClipboardBody>
				<GroupContent $top={0} />
				<GroupLabel>Clipboard</GroupLabel>
			</RibbonGroup>
			<FontGroup />
			<ParagraphGroup />
			<BorderGroup />
			<NumberGroup />
			<LayoutGroup />
		</Ribbon>
		<DarkBar />
		<Designer>
			<TreeColumn>
				<TreeHead />
				{TREE_ITEMS.map((item) => (
					<TreeRow key={item.name}>
						<Expander $empty={!item.expand}>{item.expand ? "+" : ""}</Expander>
						<FolderIcon />
						<TreeLabel>{item.name}</TreeLabel>
					</TreeRow>
				))}
			</TreeColumn>
			<DesignArea>
				<RulerBand>
					<HorizontalRuler />
				</RulerBand>
				<WorkRow>
					<RulerTrack>
						<VerticalRuler height={423} />
						<RulerGap />
						<VerticalRuler height={107} />
					</RulerTrack>
					<Workspace>
						<ReportPage>
							<ReportHeader>AllCountryImportReport</ReportHeader>
							<ChartRow>
								<ChartCard>
									<ChartCaption>Bar Chart Of the All Countrys' Import</ChartCaption>
									<BarChart />
								</ChartCard>
								<ChartCard>
									<ChartCaption>Pie Chart of the All Countrys' Import</ChartCaption>
									<PieRow>
										<PieChart size={269} values={COUNTRY_VALUES} colors={COUNTRY_COLORS} />
										<CountryLegend gap={5} rowH={11} size={12} swatchW={22} swatchH={11} textGap={5} top={-1} />
									</PieRow>
								</ChartCard>
							</ChartRow>
							<ReportFooter>
								<TimeBox>[&amp;ExecutionTime]</TimeBox>
							</ReportFooter>
						</ReportPage>
					</Workspace>
				</WorkRow>
			</DesignArea>
		</Designer>
		<Tooltip>
			<TooltipTitle>Run (F5)</TooltipTitle>
			<TooltipText>Run the report to see the rendered report.</TooltipText>
		</Tooltip>
	</Shot>
);

export default function App() {
	return (
		<Canvas>
			<GlobalStyle />
			<Shot $left={96} $top={21} $w={857} $h={629}>
				<WizardTabs height={11} inset={33} />
				<WizardWindow>
					<EdgeColumn width={15} slices={LEFT_EDGE} />
					<ArrangeDialog />
					<EdgeColumn width={6} slices={RIGHT_EDGE} />
				</WizardWindow>
				<Instruction>
					First please drag the correct Icon Into the following Chart field!
					<br />
					Then click the Button "Next" now !
				</Instruction>
				<Callout $left={298} $top={354} $w={76} $h={37} $color="#ed1c24" />
				<Callout $left={526} $top={350} $w={99} $h={33} $color="#ed1c24" />
				<Callout $left={680} $top={582} $w={81} $h={47} $color="#fff200" $b={5} />
				<CursorTick $left={534} $top={629} />
			</Shot>

			<Shot $left={1056} $top={459} $w={858} $h={631}>
				<WizardTabs height={14.5} inset={29} />
				<WizardWindow>
					<EdgeColumn width={11} slices={LEFT_EDGE} />
					<PreviewDialog />
					<EdgeColumn width={11} slices={RIGHT_EDGE} />
				</WizardWindow>
				<Callout $left={676} $top={590} $w={81} $h={40} $color="#ed1c24" />
				<CursorTick $left={530} $top={631} />
			</Shot>

			<DesignerShot />

			<ArrowSvg $left={940} $top={560} width="112" height="84" viewBox="0 0 112 84">
				<path d="M7 23H56V5L105 42L56 78V59H7Z" fill="#fff" stroke="#000" strokeWidth="5" strokeLinejoin="round" />
			</ArrowSvg>

			<ArrowSvg $left={1948} $top={626} width="212" height="126" viewBox="0 0 212 126">
				<path d="M7 34H105V5L206 63L105 121V92H7Z" fill="#fff" stroke="#fff200" strokeWidth="4" strokeLinejoin="round" />
			</ArrowSvg>
		</Canvas>
	);
}
